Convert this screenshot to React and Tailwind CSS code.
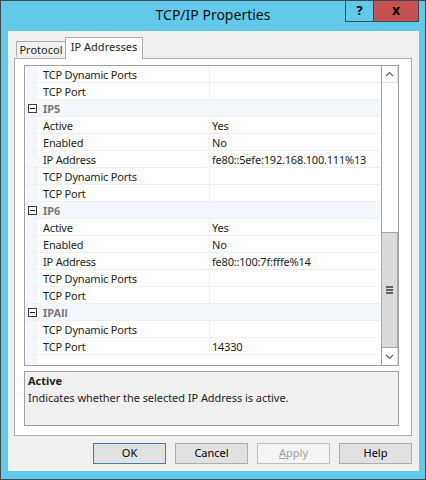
import React from 'react';

const FONT = { fontFamily: '"Noto Sans", "Open Sans", sans-serif' };

const groups = [
  {
    name: null,
    rows: [
      ['TCP Dynamic Ports', ''],
      ['TCP Port', ''],
    ],
  },
  {
    name: 'IP5',
    rows: [
      ['Active', 'Yes'],
      ['Enabled', 'No'],
      ['IP Address', 'fe80::5efe:192.168.100.111%13'],
      ['TCP Dynamic Ports', ''],
      ['TCP Port', ''],
    ],
  },
  {
    name: 'IP6',
    rows: [
      ['Active', 'Yes'],
      ['Enabled', 'No'],
      ['IP Address', 'fe80::100:7f:fffe%14'],
      ['TCP Dynamic Ports', ''],
      ['TCP Port', ''],
    ],
  },
  {
    name: 'IPAll',
    rows: [
      ['TCP Dynamic Ports', ''],
      ['TCP Port', '14330'],
    ],
  },
];

function Minus() {
  return (
    <div className="w-[9px] h-[9px] border border-[#3c3c3c] bg-white flex items-center justify-center">
      <div className="w-[5px] h-[1px] bg-[#1e1e1e]" />
    </div>
  );
}

function Chevron({ up }) {
  return (
    <svg width="9" height="6" viewBox="0 0 9 6">
      <polyline
        points={up ? '1,5 4.5,1.5 8,5' : '1,1 4.5,4.5 8,1'}
        fill="none"
        stroke="#606060"
        strokeWidth="1.2"
      />
    </svg>
  );
}

function Row({ name, value }) {
  return (
    <div className="flex h-[17px] border-b border-[#f0f0f0] tracking-[-0.2px]">
      <div className="w-[13px] bg-[#f4f7fc]" />
      <div className="w-[172px] border-r border-[#f0f0f0] pl-[5px] leading-[17px] text-[#1e1e1e]">{name}</div>
      <div className="flex-1 pl-[2px] leading-[17px] text-[#1e1e1e]">{value}</div>
    </div>
  );
}

function Category({ name }) {
  return (
    <div className="flex h-[17px] items-center bg-[#f4f7fc] border-b border-[#f0f0f0]">
      <div className="w-[13px] flex justify-center pl-[1px]">
        <Minus />
      </div>
      <div className="pl-[5px] pt-[1px] font-bold text-[#7a7a7a] leading-[16px]">{name}</div>
    </div>
  );
}

function Button({ children, variant }) {
  const cls =
    variant === 'default'
      ? 'border-[#3c7fb1] bg-[#e1e1e1] text-black'
      : variant === 'disabled'
      ? 'border-[#bfbfbf] bg-[#f4f4f4] text-[#a0a0a0]'
      : 'border-[#adadad] bg-[#e1e1e1] text-black';
  return (
    <div className={`w-[73px] h-[21px] border flex items-center justify-center ${cls}`}>{children}</div>
  );
}

export default function App() {
  return (
    <div className="w-[426px] h-[480px] bg-[#62c9ea] border border-[#3d4a50] flex flex-col text-[11px]" style={FONT}>
      {/* title bar */}
      <div className="relative h-[30px] flex justify-center pt-[3px]">
        <div className="text-[14px] font-normal text-[#111]">TCP/IP Properties</div>
        <div className="absolute top-0 right-[6px] flex">
          <div className="w-[28px] h-[21px] border-l border-b border-[#3d4a50] flex items-center justify-center font-bold text-[13px] text-black">?</div>
          <div className="w-[46px] h-[21px] bg-[#c75050] border-x border-b border-[#3d4a50] flex items-center justify-center font-bold text-[14px] text-black leading-none pb-[2px]">x</div>
        </div>
      </div>

      {/* client */}
      <div className="ml-[7px] mr-[6px] h-[440px] bg-[#f0f0f0] flex flex-col pl-[6px] pt-[7px]">
        {/* tabs */}
        <div className="flex items-end h-[20px] pl-[2px] relative z-10">
          <div className="w-[50px] h-[16px] border border-b-0 border-[#acacac] bg-[#f0f0f0] flex items-center justify-center text-[#1e1e1e] mb-[1px] pt-[1px]">
            Protocol
          </div>
          <div className="w-[78px] h-[22px] border border-b-0 border-[#acacac] bg-white -ml-[1px] -mb-[1px] flex items-center justify-center text-[#1e1e1e] pb-[3px]">
            IP Addresses
          </div>
        </div>

        {/* panel */}
        <div className="w-[398px] h-[378px] border border-[#acacac] bg-white pl-[9px] pt-[6px] flex flex-col">
          {/* property grid */}
          <div className="w-[375px] h-[301px] border border-[#a0a0a0] flex">
            <div className="flex-1 flex flex-col overflow-hidden">
              {groups.map((g, i) => (
                <React.Fragment key={i}>
                  {g.name && <Category name={g.name} />}
                  {g.rows.map(([n, v], j) => (
                    <Row key={j} name={n} value={v} />
                  ))}
                </React.Fragment>
              ))}
              <div className="flex flex-1">
                <div className="w-[13px] bg-[#f4f7fc]" />
              </div>
            </div>
            {/* scrollbar */}
            <div className="w-[17px] border-l border-[#a0a0a0] flex flex-col bg-white">
              <div className="h-[17px] border-b border-r border-[#dcdcdc] flex items-center justify-center">
                <Chevron up />
              </div>
              <div className="flex-1" />
              <div className="h-[116px] -ml-[1px] bg-[#dadada] border border-[#a8a8a8] flex flex-col items-center justify-center gap-[1px]">
                <div className="w-[7px] h-[2px] bg-[#606060]" />
                <div className="w-[7px] h-[2px] bg-[#606060]" />
                <div className="w-[7px] h-[2px] bg-[#606060]" />
              </div>
              <div className="h-[17px] border-r border-[#dcdcdc] flex items-center justify-center">
                <Chevron />
              </div>
            </div>
          </div>

          {/* description */}
          <div className="w-[375px] h-[55px] mt-[5px] border border-[#a0a0a0] bg-[#f0f0f0] pl-[3px] pt-[1px] text-[#1e1e1e] tracking-[-0.05px]">
            <div className="font-bold leading-[16px]">Active</div>
            <div className="leading-[17px]">Indicates whether the selected IP Address is active.</div>
          </div>
        </div>

        {/* buttons */}
        <div className="flex justify-end gap-[9px] mt-[7px] pr-[7px]">
          <Button variant="default">OK</Button>
          <Button>Cancel</Button>
          <Button variant="disabled">
            <span>
              <span className="underline">A</span>pply
            </span>
          </Button>
          <Button>Help</Button>
        </div>
      </div>
    </div>
  );
}
